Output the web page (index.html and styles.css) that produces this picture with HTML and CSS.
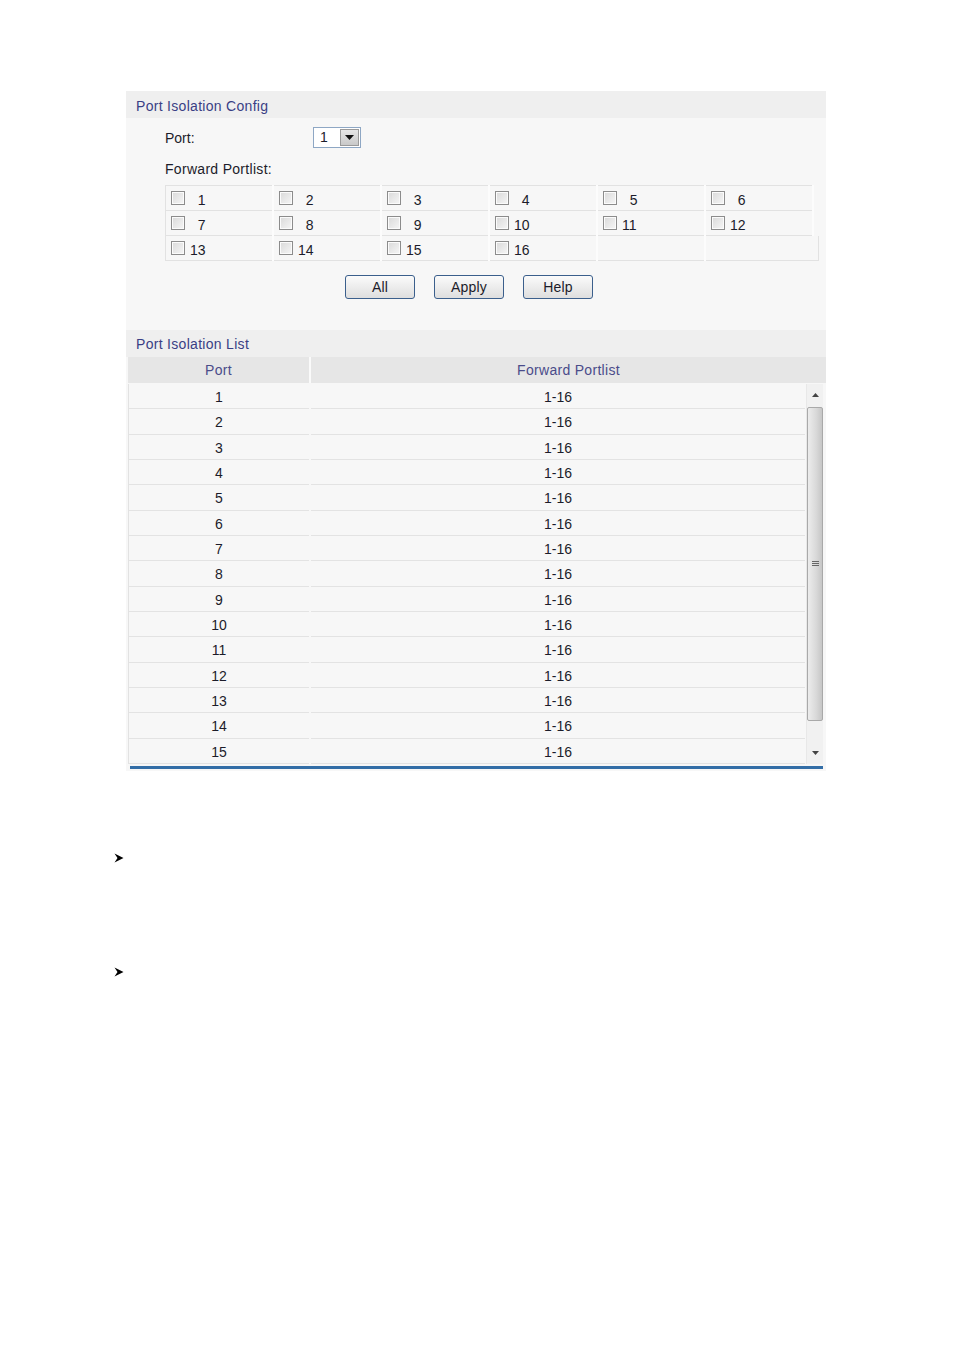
FILE: index.html
```html
<!DOCTYPE html>
<html>
<head>
<meta charset="utf-8">
<link rel="stylesheet" href="styles.css">
</head>
<body>
<div class="panel">
  <div class="panel-title first-title">Port Isolation Config</div>
  <div class="config">
    <div class="port-row">
      <span class="label">Port:</span>
      <div class="select">
        <span class="sel-val">1</span>
        <span class="sel-btn"><svg width="9" height="5" viewBox="0 0 9 5"><path d="M0 0H9L4.5 5Z" fill="#111"/></svg></span>
      </div>
    </div>
    <div class="fwd-label">Forward Portlist:</div>
    <div class="port-grid">
      <label class="cell"><input type="checkbox" class="cb"><span class="num">&nbsp;&nbsp;1</span></label>
      <label class="cell"><input type="checkbox" class="cb"><span class="num">&nbsp;&nbsp;2</span></label>
      <label class="cell"><input type="checkbox" class="cb"><span class="num">&nbsp;&nbsp;3</span></label>
      <label class="cell"><input type="checkbox" class="cb"><span class="num">&nbsp;&nbsp;4</span></label>
      <label class="cell"><input type="checkbox" class="cb"><span class="num">&nbsp;&nbsp;5</span></label>
      <label class="cell"><input type="checkbox" class="cb"><span class="num">&nbsp;&nbsp;6</span></label>
      <label class="cell"><input type="checkbox" class="cb"><span class="num">&nbsp;&nbsp;7</span></label>
      <label class="cell"><input type="checkbox" class="cb"><span class="num">&nbsp;&nbsp;8</span></label>
      <label class="cell"><input type="checkbox" class="cb"><span class="num">&nbsp;&nbsp;9</span></label>
      <label class="cell"><input type="checkbox" class="cb"><span class="num">10</span></label>
      <label class="cell"><input type="checkbox" class="cb"><span class="num">11</span></label>
      <label class="cell"><input type="checkbox" class="cb"><span class="num">12</span></label>
      <label class="cell"><input type="checkbox" class="cb"><span class="num">13</span></label>
      <label class="cell"><input type="checkbox" class="cb"><span class="num">14</span></label>
      <label class="cell"><input type="checkbox" class="cb"><span class="num">15</span></label>
      <label class="cell"><input type="checkbox" class="cb"><span class="num">16</span></label>
      <div class="cell"></div>
      <div class="cell last"></div>
    </div>
    <div class="buttons">
      <button class="btn">All</button>
      <button class="btn">Apply</button>
      <button class="btn">Help</button>
    </div>
  </div>
  <div class="panel-title">Port Isolation List</div>
  <div class="list">
    <div class="list-head">
      <div class="h-port">Port</div>
      <div class="h-fwd">Forward Portlist</div>
    </div>
    <div class="list-body">
      <div class="rows">
        <div class="c-port">1</div><div class="c-fwd">1-16</div>
        <div class="c-port">2</div><div class="c-fwd">1-16</div>
        <div class="c-port">3</div><div class="c-fwd">1-16</div>
        <div class="c-port">4</div><div class="c-fwd">1-16</div>
        <div class="c-port">5</div><div class="c-fwd">1-16</div>
        <div class="c-port">6</div><div class="c-fwd">1-16</div>
        <div class="c-port">7</div><div class="c-fwd">1-16</div>
        <div class="c-port">8</div><div class="c-fwd">1-16</div>
        <div class="c-port">9</div><div class="c-fwd">1-16</div>
        <div class="c-port">10</div><div class="c-fwd">1-16</div>
        <div class="c-port">11</div><div class="c-fwd">1-16</div>
        <div class="c-port">12</div><div class="c-fwd">1-16</div>
        <div class="c-port">13</div><div class="c-fwd">1-16</div>
        <div class="c-port">14</div><div class="c-fwd">1-16</div>
        <div class="c-port">15</div><div class="c-fwd">1-16</div>
      </div>
      <div class="scrollbar">
        <div class="sb-arrow"><svg width="7" height="4" viewBox="0 0 7 4"><path d="M0 4H7L3.5 0Z" fill="#444"/></svg></div>
        <div class="sb-thumb"><svg width="7" height="6" viewBox="0 0 7 6"><path d="M0 0.5H7M0 2.5H7M0 4.5H7" stroke="#666" stroke-width="1"/></svg></div>
        <div class="sb-arrow down"><svg width="7" height="4" viewBox="0 0 7 4"><path d="M0 0H7L3.5 4Z" fill="#444"/></svg></div>
      </div>
    </div>
    <div class="bottom-line"></div>
  </div>
</div>

<div class="bullets">
  <div class="bullet first"><svg width="10" height="10" viewBox="0 0 10 10"><path d="M0.5 0.5L9.5 5L0.5 9.5L3.5 5Z" fill="#000"/></svg></div>
  <div class="bullet second"><svg width="10" height="10" viewBox="0 0 10 10"><path d="M0.5 0.5L9.5 5L0.5 9.5L3.5 5Z" fill="#000"/></svg></div>
</div>
</body>
</html>
```
FILE: styles.css
```css
* { box-sizing: border-box; }
body {
  margin: 0;
  background: #fff;
  font-family: "Liberation Sans", Arial, sans-serif;
  font-size: 14px;
  color: #1c1c2a;
}
.panel {
  width: 700px;
  margin: 91px 0 0 126px;
  background: #f7f7f7;
  padding-bottom: 2px;
}
.panel-title {
  height: 27px;
  line-height: 29px;
  padding-left: 10px;
  background: #efefef;
  color: #3a3f85;
  letter-spacing: 0.3px;
}
.first-title {
  line-height: 31px;
}
.config {
  padding: 9px 0 31px 39px;
}
.port-row {
  display: flex;
  align-items: center;
  height: 21px;
}
.label {
  width: 148px;
}
.select {
  display: flex;
  width: 48px;
  height: 21px;
  border: 1px solid #8ea7c4;
  background: #fff;
}
.sel-val {
  flex: 1;
  padding-left: 6px;
  line-height: 19px;
}
.sel-btn {
  width: 19px;
  margin: 1px;
  display: flex;
  align-items: center;
  justify-content: center;
  background: linear-gradient(#e6e6e6, #c9c9c9);
  border: 1px solid #9a9a9a;
}
.fwd-label {
  margin-top: 12px;
  line-height: 18px;
  letter-spacing: 0.3px;
}
.port-grid {
  margin-top: 7px;
  display: grid;
  grid-template-columns: repeat(6, 106px);
  column-gap: 2px;
  width: 649px;
  background: #fcfcfc;
  border-left: 1px solid #e2e2e2;
}
.cell {
  display: flex;
  align-items: center;
  height: 25px;
  padding-left: 5px;
  background: #f7f7f7;
  border-bottom: 1px solid #e2e2e2;
}
.cell:nth-child(-n+6) {
  height: 26px;
  border-top: 1px solid #e2e2e2;
}
.cell.last {
  width: 113px;
  border-right: 1px solid #e2e2e2;
}
.cb {
  appearance: none;
  -webkit-appearance: none;
  margin: 0;
  width: 14px;
  height: 14px;
  border: 1px solid #8c8c8c;
  background: linear-gradient(135deg, #d9d9d9, #f6f6f6);
  box-shadow: inset 0 0 0 1px #fbfbfb;
}
.num {
  margin-left: 5px;
  padding-top: 3px;
}
.buttons {
  display: flex;
  gap: 19px;
  margin-top: 14px;
  padding-left: 180px;
}
.btn {
  width: 70px;
  height: 24px;
  padding: 0;
  font-family: "Liberation Sans", Arial, sans-serif;
  font-size: 14px;
  color: #1c1c2a;
  border: 1px solid #3b5f8c;
  border-radius: 3px;
  background: linear-gradient(#fbfbfb, #dedede);
  letter-spacing: 0.2px;
}
.list {
  padding-left: 2px;
}
.list-head {
  display: flex;
  gap: 2px;
  height: 26px;
  background: #fafafa;
  color: #4a4c8a;
  margin-bottom: 1px;
}
.h-port, .h-fwd {
  background: #e6e6e6;
  text-align: center;
  line-height: 26px;
  letter-spacing: 0.3px;
}
.h-port { width: 181px; }
.h-fwd { flex: 1; }
.list-body {
  display: flex;
  width: 695px;
  border-left: 1px solid #e2e2e2;
}
.rows {
  display: grid;
  grid-template-columns: 180px 494px;
  column-gap: 2px;
  grid-auto-rows: 25.33px;
  width: 676px;
}
.c-port, .c-fwd {
  text-align: center;
  line-height: 26px;
  border-bottom: 1px solid #e3e3e3;
}
.scrollbar {
  width: 17px;
  margin-left: 1px;
  display: flex;
  flex-direction: column;
  background: #f1f1f1;
  border-left: 1px solid #e8e8e8;
}
.sb-arrow {
  height: 22px;
  display: flex;
  align-items: center;
  justify-content: center;
}
.sb-arrow.down {
  margin-top: auto;
}
.sb-thumb {
  height: 314px;
  margin-top: 1px;
  border: 1px solid #a9a9a9;
  border-radius: 2px;
  background: linear-gradient(90deg, #ececec, #d8d8d8 60%, #c6c6c6);
  display: flex;
  align-items: center;
  justify-content: center;
}
.bottom-line {
  height: 3px;
  width: 693px;
  margin: 2px 0 0 2px;
  background: #336ea7;
}
.bullets {
  padding-left: 114px;
}
.bullet {
  height: 10px;
  display: flex;
}
.bullet.first { margin-top: 82px; }
.bullet.second { margin-top: 104px; }
```
